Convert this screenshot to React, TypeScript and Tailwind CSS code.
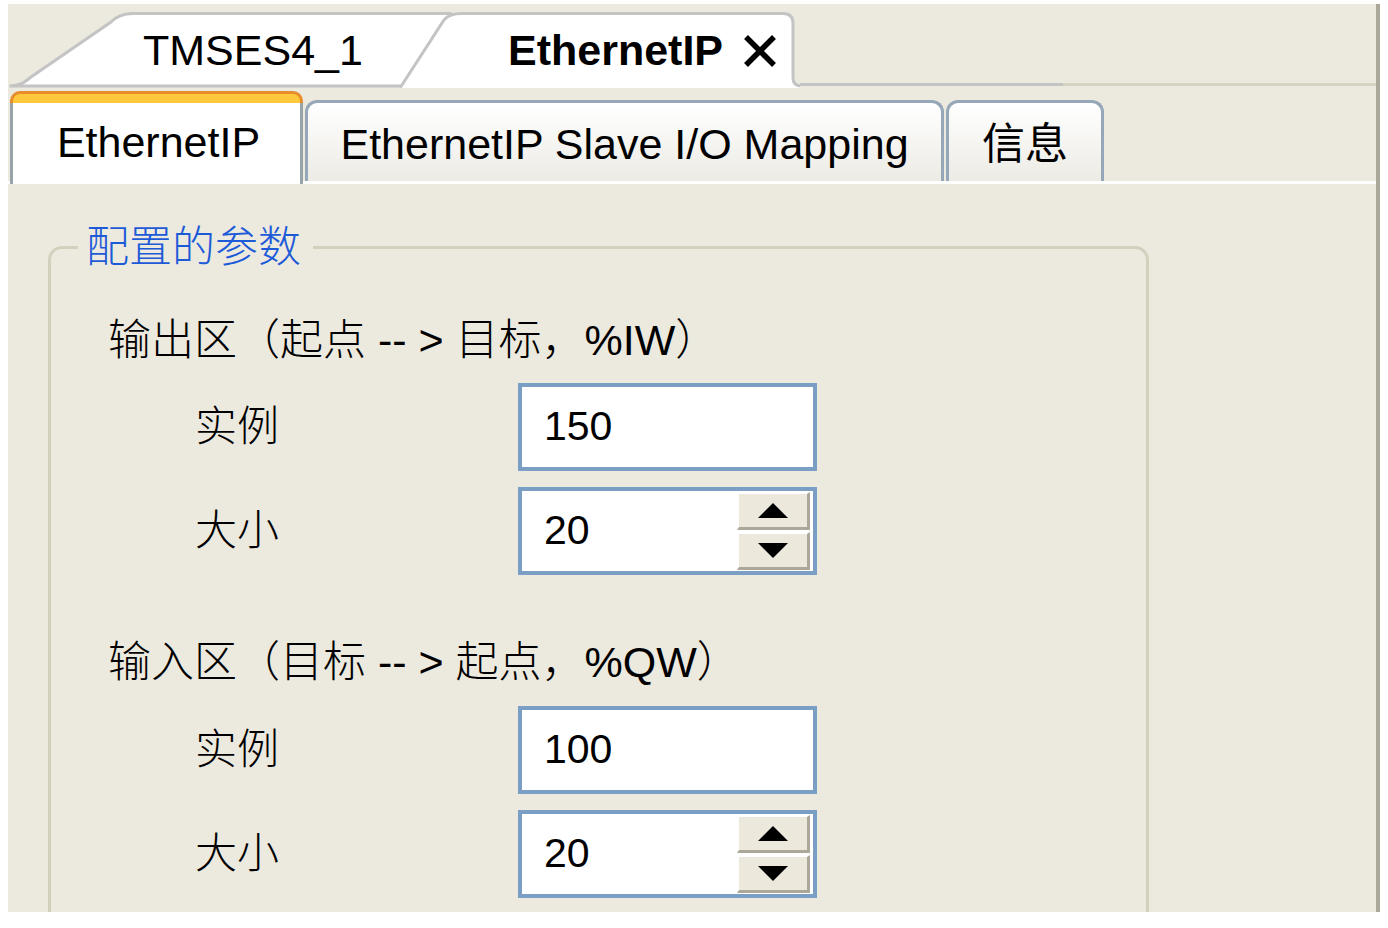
import type { ReactNode } from "react";

function EditorTabs() {
  return (
    <div className="h-[84px] shrink-0 flex items-end">
      {/* inactive slanted tab */}
      <div className="relative w-[452px] h-[78px] flex items-center pl-[135px]">
        <svg className="absolute inset-0" width="452" height="78" viewBox="0 0 452 78">
          <path
            d="M1.5,76 C12,76 17,72 23,67 L103,12 C109,6 115,3.5 125,3.5 L440,3.5 C447,3.5 450,8 446,13 L394,76 Z"
            fill="#ffffff"
            stroke="#c4c4c4"
            strokeWidth="3"
          />
        </svg>
        <span className="relative text-[43px] leading-none pt-[2px]">TMSES4_1</span>
      </div>
      {/* active tab */}
      <div className="relative -ml-[60px] w-[400px] h-[78px] flex items-center pl-[108px]">
        <svg className="absolute inset-0" width="400" height="78" viewBox="0 0 400 78">
          <path
            d="M0,78 L44,10 C48,5 53,3.5 62,3.5 L383,3.5 Q393,3.5 393,13.5 L393,68 Q393,76 402,76 L402,78 Z"
            fill="#ffffff"
          />
          <path
            d="M0,78 L44,10 C48,5 53,3.5 62,3.5 L383,3.5 Q393,3.5 393,13.5 L393,68 Q393,76 402,76"
            fill="none"
            stroke="#c4c4c4"
            strokeWidth="3"
          />
        </svg>
        <span className="relative text-[43px] font-bold leading-none pt-[2px]">EthernetIP</span>
        <svg className="relative ml-[20px] mt-[3px]" width="34" height="34" viewBox="0 0 34 34">
          <path d="M3,3 L31,31 M31,3 L3,31" stroke="#000" strokeWidth="5.5" />
        </svg>
      </div>
      <div className="w-[263px] h-[3px] mb-[2px] bg-[#c4c4c4]" />
      <div className="flex-1 h-[3px] mb-[2px] bg-[#d5d3c2]" />
    </div>
  );
}

function SubTab({ children, width }: { children: ReactNode; width: string }) {
  return (
    <div
      className={`${width} h-[81px] ml-[2px] border-[3px] border-b-0 border-[#95a7b8] rounded-t-[12px] bg-gradient-to-b from-white to-[#ecebe5] flex items-center justify-center`}
    >
      <span className="text-[43px] leading-none pt-[5px]">{children}</span>
    </div>
  );
}

function Triangle({ up }: { up?: boolean }) {
  return (
    <svg width="30" height="15" viewBox="0 0 30 15">
      <polygon points={up ? "15,0 30,15 0,15" : "0,0 30,0 15,15"} fill="#000" />
    </svg>
  );
}

function Field({ value, spin }: { value: string; spin?: boolean }) {
  return (
    <div className="w-[299px] h-[88px] border-4 border-[#7b9ec4] bg-white flex items-center pl-[22px] pr-[3px]">
      <span className="flex-1 text-[41px] leading-none">{value}</span>
      {spin && (
        <div className="flex flex-col gap-[2px] w-[73px]">
          <div className="h-[38px] bg-[#ece9dc] border-t-2 border-l-2 border-white border-r-[3px] border-b-[3px] border-r-[#aca899] border-b-[#aca899] flex items-center justify-center">
            <Triangle up />
          </div>
          <div className="h-[38px] bg-[#ece9dc] border-t-2 border-l-2 border-white border-r-[3px] border-b-[3px] border-r-[#aca899] border-b-[#aca899] flex items-center justify-center">
            <Triangle />
          </div>
        </div>
      )}
    </div>
  );
}

function Row({ label, value, spin }: { label: string; value: string; spin?: boolean }) {
  return (
    <div className="flex items-center h-[87px]">
      <span className="ml-[87px] w-[323px] text-[42px] leading-none font-light">{label}</span>
      <Field value={value} spin={spin} />
    </div>
  );
}

export default function App() {
  return (
    <div className="w-[1388px] h-[928px] bg-white pt-[4px] pl-[8px] text-black font-['Liberation_Sans','Noto_Sans_CJK_SC',sans-serif]">
      <div className="w-[1372px] h-[908px] bg-[#ece9de] border-r-4 border-[#aca899] flex flex-col overflow-hidden">
        <EditorTabs />

        {/* page tabs */}
        <div className="h-[96px] shrink-0 flex items-end border-b-[3px] border-white">
          <div className="relative z-10 w-[293px] h-[93px] -mb-[3px] ml-[2px] flex flex-col">
            <div className="h-[12px] bg-[#fec83d] border-[3px] border-b-0 border-[#e88d2c] rounded-t-[10px]" />
            <div className="flex-1 bg-white border-x-[3px] border-[#98a3aa] flex items-center justify-center">
              <span className="text-[43px] leading-none pb-[2px] pl-[4px]">EthernetIP</span>
            </div>
          </div>
          <SubTab width="w-[639px]">EthernetIP Slave I/O Mapping</SubTab>
          <SubTab width="w-[158px]">信息</SubTab>
        </div>

        {/* content */}
        <div className="flex-1 shrink-0">
          <fieldset className="ml-[40px] mt-[37px] w-[1101px] border-[3px] border-[#d3d0be] rounded-[14px] p-0 m-0">
            <legend className="ml-[27px] pl-[8px] pr-[12px] text-[43px] leading-[52px] font-light text-[#1d5ad8]">
              配置的参数
            </legend>
            <div className="pl-[57px] pt-[37px] pb-[40px] flex flex-col">
              <div className="h-[60px] flex items-center text-[43px] leading-none font-light">
                输出区（起点 -- &gt; 目标，%IW）
              </div>
              <div className="mt-[13px] flex flex-col gap-[17px]">
                <Row label="实例" value="150" />
                <Row label="大小" value="20" spin />
              </div>
              <div className="mt-[58px] h-[60px] flex items-center text-[43px] leading-none font-light">
                输入区（目标 -- &gt; 起点，%QW）
              </div>
              <div className="mt-[14px] flex flex-col gap-[17px]">
                <Row label="实例" value="100" />
                <Row label="大小" value="20" spin />
              </div>
            </div>
          </fieldset>
        </div>
      </div>
    </div>
  );
}
